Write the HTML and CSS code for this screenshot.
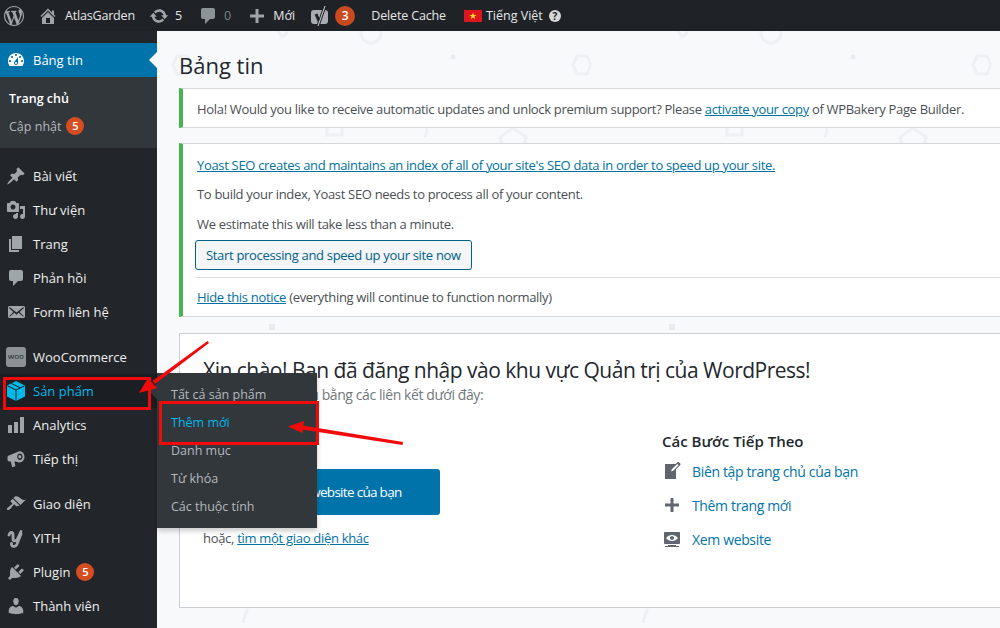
FILE: index.html
```html
<!DOCTYPE html>
<html lang="vi">
<head>
<meta charset="utf-8">
<title>Bảng tin</title>
<link rel="stylesheet" href="styles.css">
</head>
<body>
<svg width="0" height="0" class="defs">
<defs>
<symbol id="i-wp" viewBox="0 0 20 20"><path d="M20 10c0-5.51-4.49-10-10-10C4.48 0 0 4.49 0 10c0 5.52 4.48 10 10 10 5.51 0 10-4.48 10-10zM7.78 15.37L4.37 6.22c.55-.02 1.17-.08 1.17-.08.5-.06.44-1.13-.06-1.11 0 0-1.45.11-2.37.11-.18 0-.37 0-.58-.01C4.12 2.69 6.87 1.11 10 1.11c2.33 0 4.45.87 6.05 2.34-.68-.11-1.65.39-1.65 1.58 0 .74.45 1.36.9 2.1.35.61.55 1.36.55 2.46 0 1.49-1.4 5-1.4 5l-3.03-8.37c.54-.02.82-.17.82-.17.5-.05.44-1.25-.06-1.22 0 0-1.44.12-2.38.12-.87 0-2.33-.12-2.33-.12-.5-.03-.56 1.2-.06 1.22l.92.08 1.26 3.41zM17.41 10c.24-.64.74-1.87.43-4.25.7 1.29 1.05 2.71 1.05 4.25 0 3.29-1.73 6.24-4.4 7.78.97-2.59 1.94-5.2 2.92-7.78zM6.1 18.09C3.12 16.65 1.11 13.53 1.11 10c0-1.3.23-2.48.72-3.59C3.25 10.3 4.67 14.2 6.1 18.09zm4.03-6.63l2.58 6.98c-.86.29-1.76.45-2.71.45-.79 0-1.57-.11-2.29-.33.81-2.38 1.62-4.74 2.42-7.1z"/></symbol>
<symbol id="i-home" viewBox="0 0 20 20"><path d="M16 8.5l1.53 1.53-1.06 1.06L10 4.62l-6.47 6.47-1.06-1.06L10 2.5l4 4v-2h2v4zm-6-2.46l6 5.99V18H4v-5.97zM12 17v-5H8v5h4z"/></symbol>
<symbol id="i-update" viewBox="0 0 20 20"><path d="M10.2 3.28c3.53 0 6.43 2.61 6.92 6h2.08l-3.5 4-3.5-4h2.32c-.45-1.97-2.21-3.44-4.32-3.44-1.45 0-2.73.71-3.54 1.78L4.95 5.66C6.23 4.2 8.11 3.28 10.2 3.28zm-.4 13.44c-3.52 0-6.43-2.61-6.92-6H.8l3.5-4c1.17 1.33 2.33 2.67 3.5 4H5.48c.45 1.97 2.21 3.44 4.32 3.44 1.45 0 2.73-.71 3.54-1.78l1.71 1.95c-1.28 1.46-3.15 2.39-5.25 2.39z"/></symbol>
<symbol id="i-comment" viewBox="0 0 20 20"><path d="M5 2h10c1.1 0 2 .9 2 2v7c0 1.1-.9 2-2 2h-3l-5 5v-5H5c-1.1 0-2-.9-2-2V4c0-1.1.9-2 2-2z"/></symbol>
<symbol id="i-plus" viewBox="0 0 20 20"><path d="M17 8.5v3h-5.500V17h-3v-5.500H3v-3h5.500V3h3v5.500z"/></symbol>
<symbol id="i-dash" viewBox="0 0 20 20"><path fill-rule="evenodd" d="M3.76 16h12.48c1.1-1.37 1.76-3.11 1.76-5 0-4.42-3.58-8-8-8s-8 3.58-8 8c0 1.89.66 3.63 1.76 5zM10 4c.55 0 1 .45 1 1s-.45 1-1 1-1-.45-1-1 .45-1 1-1zM6 6c.55 0 1 .45 1 1s-.45 1-1 1-1-.45-1-1 .45-1 1-1zm8 0c.55 0 1 .45 1 1s-.45 1-1 1-1-.45-1-1 .45-1 1-1zm-5.37 5.55L12 7v6c0 1.1-.9 2-2 2s-2-.9-2-2c0-.57.24-1.08.63-1.45zM4 10c.55 0 1 .45 1 1s-.45 1-1 1-1-.45-1-1 .45-1 1-1zm12 0c.55 0 1 .45 1 1s-.45 1-1 1-1-.45-1-1 .45-1 1-1zm-5 3c0-.55-.45-1-1-1s-1 .45-1 1 .45 1 1 1 1-.45 1-1z"/></symbol>
<symbol id="i-post" viewBox="0 0 20 20"><path d="M10.44 3.02l1.82-1.82 6.36 6.35-1.83 1.82c-1.05-.68-2.48-.57-3.41.36l-.75.75c-.92.93-1.04 2.35-.35 3.41l-1.83 1.82-2.41-2.41-2.8 2.79c-.42.42-3.38 2.71-3.8 2.29s1.86-3.39 2.28-3.81l2.79-2.79L4.1 9.36l1.83-1.82c1.05.69 2.48.57 3.4-.36l.75-.75c.93-.92 1.05-2.35.36-3.41z"/></symbol>
<symbol id="i-media" viewBox="0 0 20 20"><path fill-rule="evenodd" d="M13 11V4c0-.55-.45-1-1-1h-1.670L9 1H5L3.670 3H2c-.55 0-1 .45-1 1v7c0 .55.45 1 1 1h10c.55 0 1-.45 1-1zM7 4.500c1.380 0 2.500 1.120 2.500 2.500S8.380 9.500 7 9.500 4.500 8.380 4.500 7 5.620 4.500 7 4.500zM14 6h5v10.500c0 1.380-1.120 2.500-2.500 2.500S14 17.880 14 16.500s1.120-2.500 2.500-2.500c.17 0 .34.02.5.05V9h-3V6zm-4 8.050V13h2v3.500c0 1.380-1.120 2.500-2.500 2.500S7 17.880 7 16.500 8.120 14 9.500 14c.17 0 .34.02.5.05z"/></symbol>
<symbol id="i-page" viewBox="0 0 20 20"><path d="M6 15V2h10v13H6zm-1 1h8v2H3V5h2v11z"/></symbol>
<symbol id="i-mail" viewBox="0 0 20 20"><path d="M19 14.5v-9c0-.83-.67-1.5-1.5-1.5H3.49c-.83 0-1.5.67-1.5 1.5v9c0 .83.67 1.5 1.5 1.5H17.5c.83 0 1.5-.67 1.5-1.5zm-1.31-9.11c.33.33.15.67-.03.84L13.6 9.95l3.9 4.06c.12.14.2.36.06.51-.13.16-.43.15-.56.05l-4.37-3.73-2.14 1.95-2.13-1.95-4.37 3.73c-.13.1-.43.11-.56-.05-.14-.15-.06-.37.06-.51l3.9-4.06-4.06-3.72c-.18-.17-.36-.51-.03-.84s.67-.17.95.07l6.24 5.04 6.25-5.04c.28-.24.62-.4.95-.07z"/></symbol>
<symbol id="i-chart" viewBox="0 0 20 20"><path d="M18 18V2h-4v16h4zm-6 0V7H8v11h4zm-6 0v-8H2v8h4z"/></symbol>
<symbol id="i-mega" viewBox="0 0 20 20"><path fill-rule="evenodd" d="M13.500 2.200c2.800 0 5 2.500 5 5.600s-2.200 5.600-5 5.600c-.3 0-3-.7-4.200-1l-.9.3.9 3.900c.1.500-.2.900-.7 1l-1.600.4c-.5.1-.9-.2-1-.6l-1.100-4.600-1.900-.5c-.9-.2-1.500-1-1.500-1.900V8.500c0-.9.5-1.600 1.300-2L12.700 2.400c.3-.1.5-.2.8-.2zm.4 2.300c-1.500 0-2.700 1.500-2.700 3.300s1.200 3.300 2.700 3.300 2.700-1.500 2.700-3.300-1.200-3.300-2.700-3.300zm-.1 1.600c.9 0 1.500.8 1.500 1.700s-.7 1.700-1.500 1.700-1.400-.8-1.400-1.700.6-1.700 1.400-1.700z"/></symbol>
<symbol id="i-brush" viewBox="0 0 20 20"><path d="M14.48 11.06L7.41 3.99l1.5-1.5c.5-.56 2.3-.47 3.51.32 1.21.8 1.43 1.28 2.91 2.1 1.18.64 2.45 1.26 4.45.85zm-.71.71L6.7 4.7 4.93 6.47c-.39.39-.39 1.02 0 1.41l1.06 1.06c.39.39.39 1.03 0 1.42-.6.6-1.43 1.11-2.21 1.69-.35.26-.7.53-1.01.84C1.43 13.23.4 14.91 1.2 15.7c.8.79 2.48-.23 3.8-1.56.3-.31.58-.66.84-1.02.57-.78 1.08-1.61 1.69-2.21.39-.39 1.02-.39 1.41 0l1.06 1.06c.39.39 1.02.39 1.41 0z"/></symbol>
<symbol id="i-plug" viewBox="0 0 20 20"><path d="M13.11 4.36L9.87 7.6 8 5.73l3.24-3.24c.35-.34 1.05-.2 1.56.32.52.51.66 1.21.31 1.55zm-8 1.77l.91-1.12 9.01 9.01-1.19.84c-.71.71-2.63 1.16-3.82 1.16H6.14L4.9 17.26c-.59.59-1.54.59-2.12 0-.59-.58-.59-1.53 0-2.12l1.24-1.24v-3.88c0-1.13.4-3.19 1.09-3.89zm7.26 3.97l3.24-3.24c.34-.35 1.04-.21 1.55.31.52.51.66 1.21.31 1.55l-3.24 3.25z"/></symbol>
<symbol id="i-user" viewBox="0 0 20 20"><path d="M10 9.25c-2.27 0-2.73-3.44-2.73-3.44C7 4.02 7.82 2 9.97 2c2.16 0 2.98 2.02 2.71 3.81 0 0-.41 3.44-2.68 3.44zm0 2.57L12.72 10c2.39 0 4.52 2.33 4.52 4.53v2.49s-3.65 1.13-7.24 1.13c-3.65 0-7.24-1.13-7.24-1.13v-2.49c0-2.25 1.94-4.48 4.47-4.48z"/></symbol>
<symbol id="i-write" viewBox="0 0 20 20"><path d="M16.89 1.2l1.41 1.41c.39.39.39 1.02 0 1.41L14 8.33V18H3V3h10.67l1.8-1.8c.4-.39 1.03-.4 1.42 0zm-5.66 8.48l5.37-5.36-1.42-1.42-5.36 5.37-.71 2.12z"/></symbol>
<symbol id="i-view" viewBox="0 0 20 20"><path fill-rule="evenodd" d="M18 14V4c0-.55-.45-1-1-1H3c-.55 0-1 .45-1 1v10c0 .55.45 1 1 1h14c.55 0 1-.45 1-1zm-8-8c2.3 0 4.4 1.14 6 3-1.6 1.86-3.7 3-6 3s-4.4-1.14-6-3c1.6-1.86 3.7-3 6-3zm2 3c0-1.1-.9-2-2-2s-2 .9-2 2 .9 2 2 2 2-.9 2-2zm2 8h3v1H3v-1h3v-1h8v1z"/></symbol>
<pattern id="tile" patternUnits="userSpaceOnUse" width="400" height="628" patternTransform="translate(-157 -31)">
  <g fill="none" stroke="#eef0f3" stroke-width="3">
    <circle cx="371" cy="33" r="10"/>
    <path d="M173 65l4-9h10l4 9-4 9h-10z"/>
    <path d="M278 31l4 6 6-5"/>
    <path d="M327 120v15h15v-15"/>
    <path d="M27 128c0 4-1 7-3 9"/>
    <path d="M113 128l13 9-4 14h-18l-4-14z"/>
    <path d="M248 609c-3 4-4 9-5 14"/>
  </g>
  <circle cx="53" cy="57" r="2.500" fill="#e9ebef"/>
  <rect x="269" y="324" width="6" height="6" fill="#e9ebef"/>
</pattern>
</defs>
</svg>

<header class="topbar">
  <a class="tb-item tb-wp"><svg class="tb-icon"><use href="#i-wp"/></svg></a>
  <a class="tb-item tb-home"><svg class="tb-icon"><use href="#i-home"/></svg><span>AtlasGarden</span></a>
  <a class="tb-item tb-wide"><svg class="tb-icon"><use href="#i-update"/></svg><span>5</span></a>
  <a class="tb-item tb-wide tb-muted"><svg class="tb-icon"><use href="#i-comment"/></svg><span>0</span></a>
  <a class="tb-item"><svg class="tb-icon"><use href="#i-plus"/></svg><span>Mới</span></a>
  <a class="tb-item tb-yoast">
    <svg class="tb-icon" viewBox="0 0 20 20"><rect x="1" y="4" width="17" height="14" rx="3" class="yoast-box"/><path class="yoast-cut" d="M6 8l3 7"/><path class="yoast-cut" d="M15 0L8 20"/><path class="yoast-slash" d="M15 0L8 20"/></svg>
    <span class="badge badge-bar">3</span>
  </a>
  <a class="tb-item tb-cache"><span>Delete Cache</span></a>
  <a class="tb-item tb-lang">
    <svg class="flag" viewBox="0 0 18 12"><rect width="18" height="12" fill="#e0161f"/><path fill="#ffe21a" d="M9 2.500l.85 2.500h2.650l-2.150 1.600.8 2.500L9 7.600 6.850 9.100l.8-2.500L5.500 5h2.650z"/></svg>
    <span>Tiếng Việt</span>
    <span class="help">?</span>
  </a>
</header>

<div class="shell">
  <nav class="sidebar">
    <a class="nav-item nav-current"><svg class="nav-icon"><use href="#i-dash"/></svg><span>Bảng tin</span></a>
    <div class="subnav">
      <a class="subnav-item subnav-on">Trang chủ</a>
      <a class="subnav-item">Cập nhật <span class="badge">5</span></a>
    </div>
    <div class="nav-group">
      <a class="nav-item"><svg class="nav-icon"><use href="#i-post"/></svg><span>Bài viết</span></a>
      <a class="nav-item"><svg class="nav-icon"><use href="#i-media"/></svg><span>Thư viện</span></a>
      <a class="nav-item"><svg class="nav-icon"><use href="#i-page"/></svg><span>Trang</span></a>
      <a class="nav-item"><svg class="nav-icon"><use href="#i-comment"/></svg><span>Phản hồi</span></a>
      <a class="nav-item"><svg class="nav-icon"><use href="#i-mail"/></svg><span>Form liên hệ</span></a>
    </div>
    <div class="nav-group">
      <a class="nav-item"><span class="woo-icon">woo</span><span>WooCommerce</span></a>
      <a class="nav-item nav-active">
        <svg class="nav-icon" viewBox="0 0 20 20"><path class="cube" d="M10 0l9 4.500v11L10 20l-9-4.500v-11z"/><path class="cube-line" d="M1.500 4.800L10 9l8.500-4.200M10 9v11M5.500 2.500L14 6.800"/></svg>
        <span>Sản phẩm</span>
      </a>
      <a class="nav-item"><svg class="nav-icon"><use href="#i-chart"/></svg><span>Analytics</span></a>
      <a class="nav-item"><svg class="nav-icon"><use href="#i-mega"/></svg><span>Tiếp thị</span></a>
    </div>
    <div class="nav-group">
      <a class="nav-item"><svg class="nav-icon"><use href="#i-brush"/></svg><span>Giao diện</span></a>
      <a class="nav-item"><svg class="nav-icon" viewBox="0 0 20 20"><path class="yith" d="M3 7c1-3.500 4-3.500 4-.5v4.500c0 2.500 3 2.500 4.500 0L15 3.500M15 6l-4 10c-1.500 3.500-6 3-5.500-.5"/></svg><span>YITH</span></a>
      <a class="nav-item"><svg class="nav-icon"><use href="#i-plug"/></svg><span>Plugin</span><span class="badge">5</span></a>
      <a class="nav-item"><svg class="nav-icon"><use href="#i-user"/></svg><span>Thành viên</span></a>
    </div>
  </nav>

  <main class="main">
    <svg class="pattern" width="843" height="597"><rect width="843" height="597" fill="url(#tile)"/></svg>
    <h1 class="page-title">Bảng tin</h1>
    <div class="notice notice-wpb">
      <p>Hola! Would you like to receive automatic updates and unlock premium support? Please <a href="#">activate your copy</a> of WPBakery Page Builder.</p>
    </div>
    <div class="notice notice-yoast">
      <p class="yoast-lead"><a href="#">Yoast SEO creates and maintains an index of all of your site's SEO data in order to speed up your site.</a></p>
      <p class="yoast-body">To build your index, Yoast SEO needs to process all of your content.</p>
      <p>We estimate this will take less than a minute.</p>
      <button class="btn-outline">Start processing and speed up your site now</button>
      <hr class="rule">
      <p><a href="#">Hide this notice</a> (everything will continue to function normally)</p>
    </div>
    <section class="welcome">
      <h2 class="welcome-title">Xin chào! Bạn đã đăng nhập vào khu vực Quản trị của WordPress!</h2>
      <p class="welcome-sub">Bạn có thể bắt đầu bằng các liên kết dưới đây:</p>
      <div class="welcome-cols">
        <div class="col-left">
          <h3 class="col-title">Bắt Đầu</h3>
          <button class="btn-primary">Tùy biến website của bạn</button>
          <p class="alt">hoặc, <a href="#">tìm một giao diện khác</a></p>
        </div>
        <div class="col-right">
          <h3 class="col-title">Các Bước Tiếp Theo</h3>
          <ul class="steps">
            <li><svg class="step-icon"><use href="#i-write"/></svg><a href="#">Biên tập trang chủ của bạn</a></li>
            <li><svg class="step-icon"><use href="#i-plus"/></svg><a href="#">Thêm trang mới</a></li>
            <li><svg class="step-icon"><use href="#i-view"/></svg><a href="#">Xem website</a></li>
          </ul>
        </div>
      </div>
    </section>
  </main>
</div>

<div class="flyout">
  <a>Tất cả sản phẩm</a>
  <a class="flyout-on">Thêm mới</a>
  <a>Danh mục</a>
  <a>Từ khóa</a>
  <a>Các thuộc tính</a>
</div>
<div class="mark mark-nav"></div>
<div class="mark mark-flyout"></div>
<svg class="arrows" width="1000" height="628" viewBox="0 0 1000 628">
  <g class="arrow-red">
    <path d="M207.500 341l1.500 2L155 384l-2.500-3z"/>
    <path d="M139 393l9-15 9 10z"/>
    <path d="M403 442l-.5 3L302 429.500l.5-4z"/>
    <path d="M288 426.500l16-5.500-1.500 12z"/>
  </g>
</svg>
</body>
</html>
```
FILE: styles.css
```css
* { box-sizing: border-box; }
html, body { margin: 0; padding: 0; height: 628px; overflow: hidden; }
body { font-family: "Open Sans", "Noto Sans", sans-serif; font-size: 13px; color: #4a4f54; background: #f8f9fb; position: relative; }
a { color: inherit; text-decoration: none; }
.defs { position: absolute; }

.topbar { height: 31px; background: #1f2327; color: #e6e7e8; display: flex; align-items: center; padding-left: 4px; font-size: 12.500px; }
.tb-item { display: flex; align-items: center; gap: 6px; margin-right: 15px; }
.tb-icon { width: 20px; height: 20px; fill: #a0a5aa; flex: none; }
.tb-muted { color: #7d8286; }
.tb-muted .tb-icon { fill: #8d9296; }
.tb-wp { margin-right: 14px; }
.tb-home { gap: 7px; margin-right: 14px; letter-spacing: -.18px; }
.tb-wide { margin-right: 16px; }
.tb-yoast { gap: 5px; margin-right: 16px; }
.tb-cache { letter-spacing: -.15px; margin-right: 18px; }
.yoast-box { fill: #a9adb1; }
.yoast-cut { fill: none; stroke: #1f2327; stroke-width: 3px; }
.yoast-slash { fill: none; stroke: #d5d7d9; stroke-width: 1px; }
.tb-lang { gap: 4px; margin-right: 0; }
.flag { width: 18px; height: 12px; }
.help { width: 12px; height: 12px; border-radius: 50%; background: #d5d7d9; color: #1f2327; font-size: 10px; font-weight: 700; line-height: 12px; text-align: center; margin-left: 2px; }
.badge { display: inline-block; width: 18px; height: 18px; border-radius: 50%; background: #d54e21; color: #fff; font-size: 11px; font-weight: 600; line-height: 18px; text-align: center; }
.badge-bar { width: 20px; height: 20px; line-height: 20px; font-size: 12px; background: #ca4a1f; }

.shell { display: flex; height: 597px; }
.sidebar { width: 157px; flex: none; background: #22262b; color: #eeeeee; padding-top: 12px; overflow: hidden; }
.nav-item { display: flex; align-items: center; height: 34px; padding-left: 6px; gap: 7px; }
.nav-icon { width: 20px; height: 20px; fill: #a0a5aa; flex: none; }
.nav-current { background: #0073aa; color: #fff; position: relative; }
.nav-current .nav-icon { fill: #fff; }
.nav-current::after { content: ""; position: absolute; right: 0; top: 9px; border: 8px solid transparent; border-right-color: #f8f9fb; border-left-width: 0; }
.nav-active { background: #1b1e22; color: #00b9eb; }
.cube { fill: #00b9eb; }
.cube-line { fill: none; stroke: #1b1e22; stroke-width: 1px; }
.yith { fill: none; stroke: #a0a5aa; stroke-width: 2.800px; stroke-linecap: round; stroke-linejoin: round; }
.nav-group { margin-bottom: 11px; }
.subnav { background: #32373c; height: 71px; margin-bottom: 11px; padding-top: 7px; color: #b4b9be; font-size: 12.500px; }
.subnav-item { display: flex; align-items: center; height: 28px; padding-left: 9px; gap: 5px; }
.subnav-on { color: #fff; font-weight: 600; }
.nav-item .badge { margin-left: -1px; }
.woo-icon { width: 20px; height: 20px; border-radius: 3px; background: #8d9296; color: #22262b; font-size: 8px; line-height: 18px; text-align: center; flex: none; }

.main { flex: 1; position: relative; overflow: hidden; padding-left: 22px; min-width: 0; }
.pattern { position: absolute; left: 0; top: 0; }
.main > *:not(.pattern) { position: relative; width: 830px; }
.page-title { margin: 0; font-size: 22px; font-weight: 400; color: #23282d; height: 57px; line-height: 30px; padding-top: 19px; }
.notice { background: #fff; border: 1px solid #d5d7d9; border-left: 4px solid #46b450; border-right: 0; padding: 0 0 0 14px; letter-spacing: -.32px; }
.notice-wpb { height: 40px; margin-bottom: 15px; }
.notice p { margin: 0; line-height: 18px; }
.notice-wpb p { padding: 11px 0 9px; }
.notice a { color: #0071a1; text-decoration: underline; }
.notice-yoast { height: 174px; margin-bottom: 16px; padding-top: 12px; }
.notice-yoast p { margin-bottom: 11.500px; }
.notice-yoast .yoast-lead { margin-bottom: 11px; }
.notice-yoast .yoast-body { margin-bottom: 12px; }
.btn-outline { display: block; margin: -4.500px 0 7px -2px; height: 30px; padding: 0 10px; background: #f3f5f6; border: 1px solid #016087; border-radius: 3px; color: #016087; font: inherit; letter-spacing: inherit; }
.rule { border: 0; border-top: 1px solid #ddd; margin: 0 0 10px -2px; }
.welcome { background: #fff; border: 1px solid #ccd0d4; border-right: 0; height: 275px; padding: 22px 23px; }
.welcome-title { margin: 0; font-size: 21px; font-weight: 400; color: #23282d; line-height: 28px; letter-spacing: -.5px; }
.welcome-sub { margin: 0; font-size: 14px; letter-spacing: -.41px; color: #72777c; line-height: 22px; }
.welcome-cols { display: flex; margin-top: 25px; }
.col-left { width: 459px; }
.col-title { margin: 0; font-size: 15px; font-weight: 600; color: #23282d; line-height: 20px; }
.btn-primary { display: block; margin-top: 18px; width: 237px; height: 46px; padding-left: 24px; background: #0073aa; color: #fff; border: 0; border-radius: 3px; font: inherit; font-size: 13.500px; letter-spacing: -.7px; }
.alt { margin: 14px 0 0; letter-spacing: -.3px; line-height: 18px; }
.alt a { color: #0071a1; text-decoration: underline; }
.steps { list-style: none; margin: 3px 0 0; padding: 0; }
.steps li { display: flex; align-items: center; gap: 10px; height: 34px; color: #0073aa; font-size: 14px; letter-spacing: -.35px; }
.step-icon { width: 20px; height: 20px; fill: #5f6670; flex: none; }

.flyout { position: absolute; left: 157px; top: 373px; width: 160px; height: 155px; background: #32373c; box-shadow: 0 3px 5px rgba(0,0,0,.2); padding-top: 7px; color: #b4b9be; font-size: 12.500px; }
.flyout::before { content: ""; position: absolute; left: -8px; top: 10px; border: 8px solid transparent; border-right-color: #32373c; border-left-width: 0; }
.flyout a { display: flex; align-items: center; height: 28px; padding-left: 14px; }
.flyout-on { color: #00b9eb; }
.mark { position: absolute; border: 3px solid #f00a0a; }
.mark-nav { left: 3px; top: 377px; width: 148px; height: 33px; }
.mark-flyout { left: 159px; top: 401px; width: 160px; height: 44px; }
.arrows { position: absolute; left: 0; top: 0; pointer-events: none; }
.arrow-red { fill: #f00a0a; }
```
